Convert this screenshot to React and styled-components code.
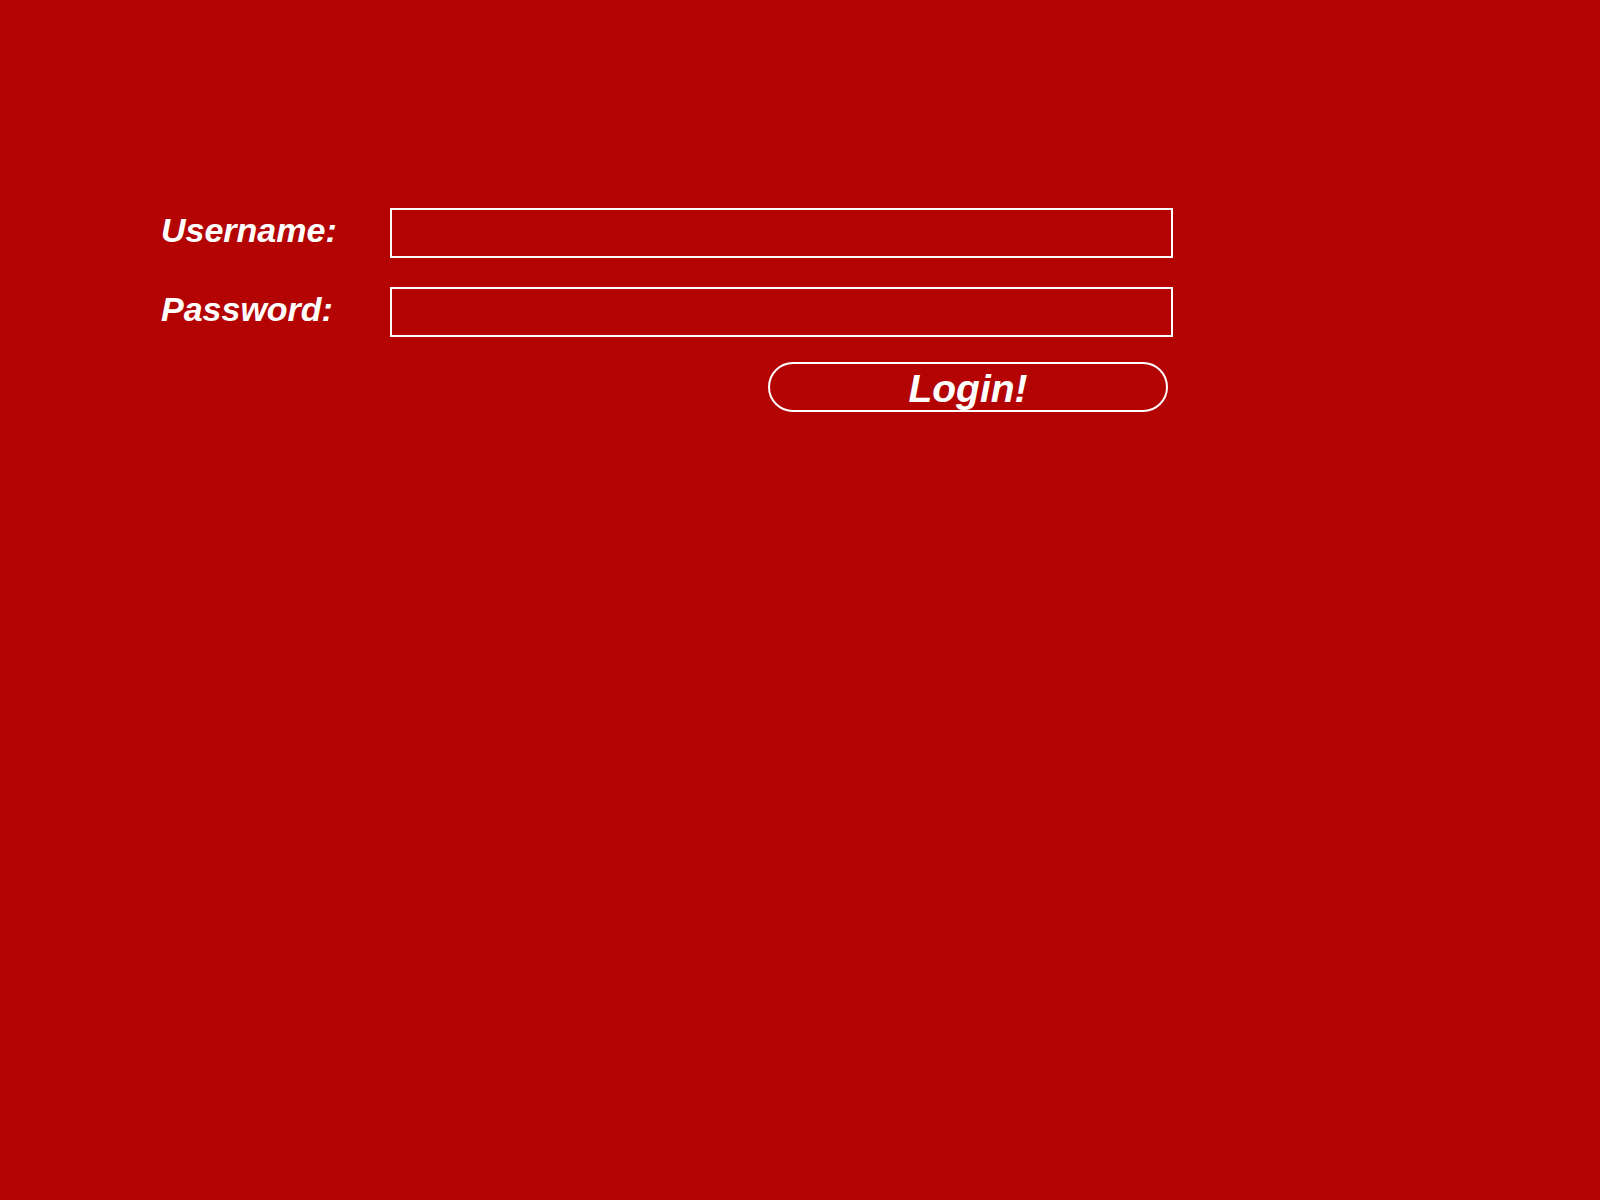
import React from "react";
import styled, { createGlobalStyle } from "styled-components";

const GlobalStyle = createGlobalStyle`
  html, body {
    margin: 0;
    padding: 0;
    background: #b40303;
    font-family: "Liberation Sans", Arial, sans-serif;
  }
  body {
    min-height: 1200px;
  }
`;

const Page = styled.main`
  min-height: 1200px;
  background: #b40303;
  padding: 208px 0 0 161px;
  box-sizing: border-box;
`;

const Form = styled.form`
  width: 1012px;
  display: flex;
  flex-direction: column;
`;

const Fields = styled.div`
  display: grid;
  grid-template-columns: 229px 783px;
  row-gap: 29px;
`;

const Label = styled.label`
  align-self: start;
  padding-top: 5px;
  font-family: "Liberation Sans", Arial, sans-serif;
  font-weight: bold;
  font-style: italic;
  font-size: 34px;
  line-height: 34px;
  color: #ffffff;
  white-space: nowrap;
`;

const Input = styled.input`
  box-sizing: border-box;
  width: 783px;
  height: 50px;
  margin: 0;
  padding: 0 10px;
  border: 2px solid #ffffff;
  border-radius: 0;
  background: transparent;
  color: #ffffff;
  font-family: "Liberation Sans", Arial, sans-serif;
  font-size: 24px;
  outline: none;
`;

const Actions = styled.div`
  display: flex;
  justify-content: flex-end;
  margin-top: 25px;
  padding-right: 5px;
`;

const Button = styled.button`
  box-sizing: border-box;
  width: 400px;
  height: 50px;
  margin: 0;
  padding: 3px 0 0;
  border: 2px solid #ffffff;
  border-radius: 25px;
  background: transparent;
  color: #ffffff;
  font-family: "Liberation Sans", Arial, sans-serif;
  font-weight: bold;
  font-style: italic;
  font-size: 39px;
  line-height: 40px;
  cursor: pointer;
`;

export default function App() {
  return (
    <>
      <GlobalStyle />
      <Page>
        <Form onSubmit={(e) => e.preventDefault()}>
          <Fields>
            <Label htmlFor="username">Username:</Label>
            <Input id="username" type="text" />
            <Label htmlFor="password">Password:</Label>
            <Input id="password" type="password" />
          </Fields>
          <Actions>
            <Button type="submit">Login!</Button>
          </Actions>
        </Form>
      </Page>
    </>
  );
}
